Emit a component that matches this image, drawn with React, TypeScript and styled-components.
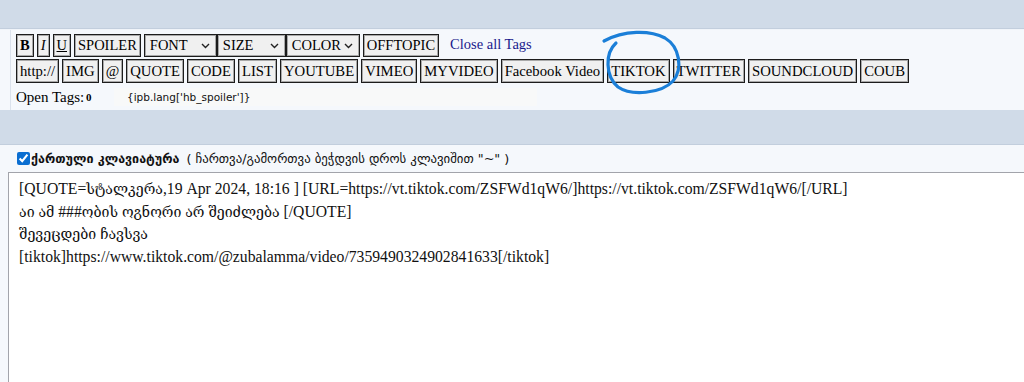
import React from "react";
import styled, { createGlobalStyle } from "styled-components";

const Global = createGlobalStyle`
  html, body { margin: 0; padding: 0; }
  body {
    background: #f5f8fc;
    font-family: "Liberation Serif", "DejaVu Serif Condensed", "DejaVu Sans Condensed", "DejaVu Sans", serif;
    width: 1024px;
    height: 382px;
    overflow: hidden;
  }
`;

const Page = styled.div`
  display: flex;
  flex-direction: column;
  height: 382px;
  position: relative;
`;

const Band = styled.div<{ $h: number }>`
  height: ${(p) => p.$h}px;
  background: #d0dbe8;
  border-bottom: 1px solid #c2cedd;
  flex: none;
`;

const EditorPanel = styled.div`
  flex: none;
  height: 80px;
  padding-left: 10px;
  background: #f5f8fc;
  border-top: 1px solid #f0f4f9;
`;

const EditorInner = styled.div`
  height: 100%;
  border-left: 1px solid #dbe2ec;
  padding: 4px 0 0 5px;
  box-sizing: border-box;
  display: flex;
  flex-direction: column;
  gap: 2px;
`;

const ToolRow = styled.div`
  display: flex;
  align-items: center;
  gap: 3px;
`;

const TagButton = styled.button<{ $b?: boolean; $i?: boolean; $u?: boolean; $wide?: boolean }>`
  font-family: "Liberation Serif", serif;
  font-size: ${(p) => (p.$wide ? 14.7 : 14.5)}px;
  line-height: 17px;
  color: #000;
  background: #f0f0f0;
  border: 1px solid #1c1c1c;
  box-shadow: inset 0 0 0 1px #a9a9a9;
  padding: 2px 3px;
  margin: 0;
  height: ${(p) => (p.$wide ? 24 : 23)}px;
  font-weight: ${(p) => (p.$b ? 700 : 400)};
  font-style: ${(p) => (p.$i ? "italic" : "normal")};
  text-decoration: ${(p) => (p.$u ? "underline" : "none")};
  white-space: nowrap;
  cursor: pointer;
`;

const SelectGroup = styled.div`
  display: flex;
`;

const FakeSelect = styled.div<{ $w: number }>`
  width: ${(p) => p.$w}px;
  height: 23px;
  box-sizing: border-box;
  background: #f0f0f0;
  border: 1px solid #1c1c1c;
  box-shadow: inset 0 0 0 1px #a9a9a9;
  display: flex;
  align-items: center;
  justify-content: space-between;
  padding: 0 6px 0 5px;
  font-size: 14.5px;
  color: #000;
`;

const CloseLink = styled.a`
  font-size: 14.5px;
  color: #1a1a8c;
  text-decoration: none;
  margin-left: 8px;
  margin-top: -2px;
`;

const OpenTagsRow = styled.div`
  display: flex;
  align-items: center;
  height: 20px;
  margin-top: 2px;
`;

const OpenLabel = styled.span`
  font-size: 15px;
  width: 70px;
`;

const OpenCount = styled.b`
  font-size: 11px;
  width: 28px;
`;

const LangBox = styled.div`
  font-family: "DejaVu Sans", Verdana, sans-serif;
  font-size: 10.5px;
  color: #111;
  background: #f8f9f9;
  width: 410px;
  height: 18px;
  display: flex;
  align-items: center;
  padding-left: 13px;
`;

const CheckRow = styled.label`
  flex: none;
  height: 27px;
  display: flex;
  align-items: center;
  padding-left: 17px;
  font-family: "DejaVu Sans", sans-serif;
  font-size: 12.5px;
  color: #111;
`;

const Check = styled.input`
  width: 13px;
  height: 13px;
  margin: 0 1px 0 0;
  accent-color: #0a6ed1;
`;

const Note = styled.span`
  font-weight: 400;
  font-size: 12.8px;
  margin-left: 7px;
`;

const Editor = styled.textarea`
  flex: 1;
  margin: 0 0 0 8px;
  border: none;
  border-top: 1px solid #a2a4ab;
  border-left: 1px solid #a2a4ab;
  background: #fff;
  resize: none;
  outline: none;
  padding: 5px 10px;
  font-family: "Liberation Serif", "DejaVu Serif Condensed", "DejaVu Sans Condensed", "DejaVu Sans", serif;
  font-size: 15.7px;
  line-height: 22.5px;
  color: #111;
`;

const Annotation = styled.svg`
  position: absolute;
  left: 0;
  top: 0;
  pointer-events: none;
`;

const Chevron = () => (
  <svg width="9" height="6" viewBox="0 0 9 6">
    <path d="M1 1l3.5 3.5L8 1" fill="none" stroke="#222" strokeWidth="1.4" />
  </svg>
);

const row2 = [
  "http://", "IMG", "@", "QUOTE", "CODE", "LIST", "YOUTUBE", "VIMEO",
  "MYVIDEO", "Facebook Video", "TIKTOK", "TWITTER", "SOUNDCLOUD", "COUB",
];

const text = `[QUOTE=სტალკერა,19 Apr 2024, 18:16 ] [URL=https://vt.tiktok.com/ZSFWd1qW6/]https://vt.tiktok.com/ZSFWd1qW6/[/URL]
აი ამ ###ობის ოგნორი არ შეიძლება [/QUOTE]
შევეცდები ჩავსვა
[tiktok]https://www.tiktok.com/@zubalamma/video/7359490324902841633[/tiktok]`;

export default function App() {
  return (
    <>
      <Global />
      <Page>
        <Band $h={28} />
        <EditorPanel>
          <EditorInner>
            <ToolRow>
              <TagButton $b>B</TagButton>
              <TagButton $i>I</TagButton>
              <TagButton $u>U</TagButton>
              <TagButton>SPOILER</TagButton>
              <SelectGroup>
                <FakeSelect $w={73}>FONT<Chevron /></FakeSelect>
                <FakeSelect $w={69}>SIZE<Chevron /></FakeSelect>
                <FakeSelect $w={74}>COLOR<Chevron /></FakeSelect>
              </SelectGroup>
              <TagButton>OFFTOPIC</TagButton>
              <CloseLink href="#">Close all Tags</CloseLink>
            </ToolRow>
            <ToolRow>
              {row2.map((t) => (
                <TagButton key={t} $wide>{t}</TagButton>
              ))}
            </ToolRow>
            <OpenTagsRow>
              <OpenLabel>Open Tags:</OpenLabel>
              <OpenCount>0</OpenCount>
              <LangBox>{"{ipb.lang['hb_spoiler']}"}</LangBox>
            </OpenTagsRow>
          </EditorInner>
        </EditorPanel>
        <Band $h={34} />
        <CheckRow>
          <Check type="checkbox" defaultChecked />
          <b>ქართული კლავიატურა</b>
          <Note>( ჩართვა/გამორთვა ბეჭდვის დროს კლავიშით "~" )</Note>
        </CheckRow>
        <Editor defaultValue={text} spellCheck={false} />
        <Annotation width="1024" height="382">
          <path
            d="M616 43 C605 53, 605 76, 618 87 C631 96, 661 94, 673 81 C683 69, 680 47, 665 38 C650 30, 624 30, 604 41"
            fill="none"
            stroke="#1b7fd8"
            strokeWidth="3.2"
            strokeLinecap="round"
          />
        </Annotation>
      </Page>
    </>
  );
}
